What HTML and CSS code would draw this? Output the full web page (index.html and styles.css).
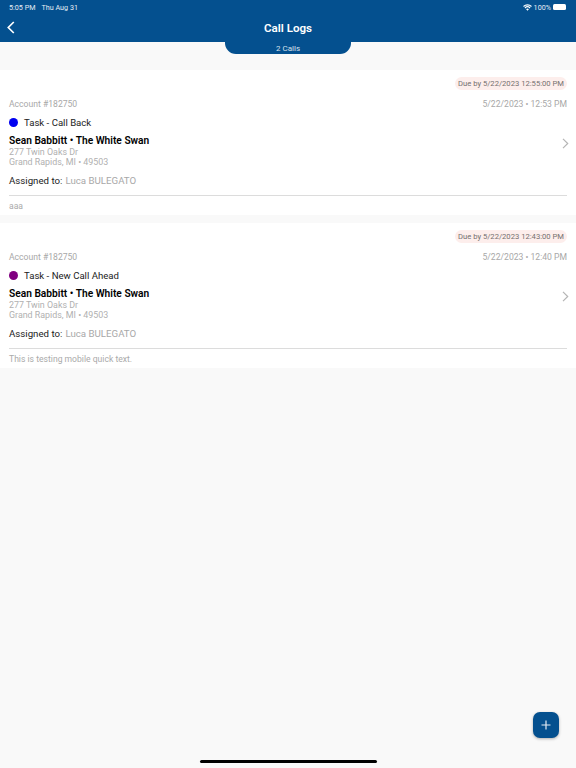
FILE: index.html
```html
<!DOCTYPE html>
<html lang="en">
<head>
  <meta charset="UTF-8">
  <title>Call Logs</title>
  <link rel="stylesheet" href="styles.css">
</head>
<body>
  <div class="header">
    <div class="status">
      <span class="status__time">5:05 PM<span class="status__date">Thu Aug 31</span></span>
      <span class="status__right">
        <svg class="status__wifi" width="9" height="7" viewBox="0 0 10 8"><path d="M5 7.6 3.4 5.9a2.3 2.3 0 0 1 3.2 0zM2.5 5 1.6 4a4.9 4.9 0 0 1 6.8 0l-.9 1a3.6 3.6 0 0 0-5 0zM.9 3.3 0 2.3a7.2 7.2 0 0 1 10 0l-.9 1a6 6 0 0 0-8.2 0z" fill="#fff"/></svg>
        100%
        <span class="battery"><span class="battery__fill"></span></span>
      </span>
    </div>
    <div class="nav">
      <svg class="nav__back" width="8" height="13" viewBox="0 0 8 13"><path d="M6.8 1 1.3 6.5l5.5 5.5" fill="none" stroke="#fff" stroke-width="1.7"/></svg>
      <span class="nav__title">Call Logs</span>
    </div>
  </div>
  <div class="tab-wrap"><div class="tab">2 Calls</div></div>

  <div class="list">
    <div class="card">
      <div class="card__due"><span class="pill">Due by 5/22/2023 12:55:00 PM</span></div>
      <div class="card__top">
        <span>Account #182750</span>
        <span>5/22/2023 • 12:53 PM</span>
      </div>
      <div class="task"><span class="task__dot task__dot--blue"></span>Task - Call Back</div>
      <div class="card__body">
        <div>
          <div class="card__name">Sean Babbitt • The White Swan</div>
          <div class="card__addr">277 Twin Oaks Dr</div>
          <div class="card__addr">Grand Rapids, MI • 49503</div>
        </div>
        <svg class="chevron" width="7" height="11" viewBox="0 0 7 11"><path d="M1 .8 5.7 5.5 1 10.2" fill="none" stroke="#b5b5b5" stroke-width="1.2"/></svg>
      </div>
      <div class="assigned"><span class="assigned__label">Assigned to:</span>Luca BULEGATO</div>
      <div class="card__note">aaa</div>
    </div>

    <div class="card">
      <div class="card__due"><span class="pill">Due by 5/22/2023 12:43:00 PM</span></div>
      <div class="card__top">
        <span>Account #182750</span>
        <span>5/22/2023 • 12:40 PM</span>
      </div>
      <div class="task"><span class="task__dot task__dot--purple"></span>Task - New Call Ahead</div>
      <div class="card__body">
        <div>
          <div class="card__name">Sean Babbitt • The White Swan</div>
          <div class="card__addr">277 Twin Oaks Dr</div>
          <div class="card__addr">Grand Rapids, MI • 49503</div>
        </div>
        <svg class="chevron" width="7" height="11" viewBox="0 0 7 11"><path d="M1 .8 5.7 5.5 1 10.2" fill="none" stroke="#b5b5b5" stroke-width="1.2"/></svg>
      </div>
      <div class="assigned"><span class="assigned__label">Assigned to:</span>Luca BULEGATO</div>
      <div class="card__note">This is testing mobile quick text.</div>
    </div>
  </div>

  <div class="fab">
    <svg width="10" height="10" viewBox="0 0 10 10"><path d="M5 .5v9M.5 5h9" stroke="#e4ecf4" stroke-width="1.2"/></svg>
  </div>
  <div class="home-bar"></div>
</body>
</html>
```

FILE: styles.css
```css
* {
  box-sizing: border-box;
}

html,
body {
  margin: 0;
  height: 100%;
  overflow: hidden;
}

body {
  position: relative;
  background: #f9f9f9;
  font-family: Roboto, "Liberation Sans", sans-serif;
  color: #000;
}

.header {
  height: 42px;
  background: #04508f;
  color: #fff;
}

.status {
  display: flex;
  justify-content: space-between;
  align-items: center;
  height: 14px;
  padding: 0 10px 0 9px;
  font-size: 7.2px;
  color: #e6edf4;
}

.status__date {
  margin-left: 6px;
}

.status__right {
  display: flex;
  align-items: center;
  gap: 2px;
}

.battery {
  display: block;
  width: 13px;
  height: 6px;
  padding: 1px;
  background: #fff;
  border-radius: 1.5px;
}

.battery__fill {
  display: block;
  height: 100%;
  background: #fff;
}

.nav {
  position: relative;
  display: flex;
  justify-content: center;
  align-items: center;
  height: 28px;
}

.nav__back {
  position: absolute;
  left: 7px;
  top: 7px;
}

.nav__title {
  font-size: 11.6px;
  font-weight: 600;
}

.tab-wrap {
  display: flex;
  justify-content: center;
  height: 28px;
}

.tab {
  width: 126px;
  height: 12px;
  padding-top: 1px;
  background: #04508f;
  border-radius: 0 0 11px 11px;
  color: #d5e1ec;
  font-size: 8px;
  line-height: 12px;
  text-align: center;
}

.list {
  display: flex;
  flex-direction: column;
  gap: 8px;
}

.card {
  height: 145px;
  padding: 7px 9px 0;
  background: #fff;
}

.card__due {
  display: flex;
  justify-content: flex-end;
}

.pill {
  height: 13px;
  padding: 0 3px;
  background: #fdeeec;
  border-radius: 7px;
  color: #75706f;
  font-size: 7.65px;
  line-height: 13px;
}

.card__top {
  display: flex;
  justify-content: space-between;
  margin-top: 7px;
  height: 14px;
  color: #a8a8a8;
  font-size: 8.6px;
  line-height: 14px;
}

.task {
  display: flex;
  align-items: center;
  gap: 6px;
  margin-top: 4px;
  height: 14px;
  color: #222;
  font-size: 9.6px;
}

.task__dot {
  width: 9px;
  height: 9px;
  border-radius: 50%;
}

.task__dot--blue {
  background: #0000f0;
}

.task__dot--purple {
  background: #800080;
}

.card__body {
  display: flex;
  justify-content: space-between;
  margin-top: 6px;
}

.card__name {
  height: 12px;
  color: #000;
  font-size: 10.2px;
  font-weight: 600;
  line-height: 12px;
}

.card__addr {
  height: 10px;
  color: #b0b0b0;
  font-size: 8.9px;
  line-height: 10px;
}

.chevron {
  margin-top: 3px;
  margin-right: -2px;
}

.assigned {
  display: flex;
  align-items: center;
  gap: 3px;
  height: 22px;
  margin-top: 7px;
  padding-bottom: 9px;
  border-bottom: 1px solid #dcdcdc;
  color: #a8a8a8;
  font-size: 9.7px;
}

.assigned__label {
  color: #222;
}

.card__note {
  margin-top: 4px;
  color: #aaa;
  font-size: 8.6px;
  line-height: 12px;
}

.fab {
  position: absolute;
  left: 533px;
  top: 712px;
  display: flex;
  justify-content: center;
  align-items: center;
  width: 26px;
  height: 26px;
  background: #04508f;
  border-radius: 7px;
  box-shadow: 0 1px 3px rgba(0, 0, 0, .3);
}

.home-bar {
  position: absolute;
  left: 200px;
  top: 760px;
  width: 177px;
  height: 3px;
  background: #000;
  border-radius: 2px;
}
```
